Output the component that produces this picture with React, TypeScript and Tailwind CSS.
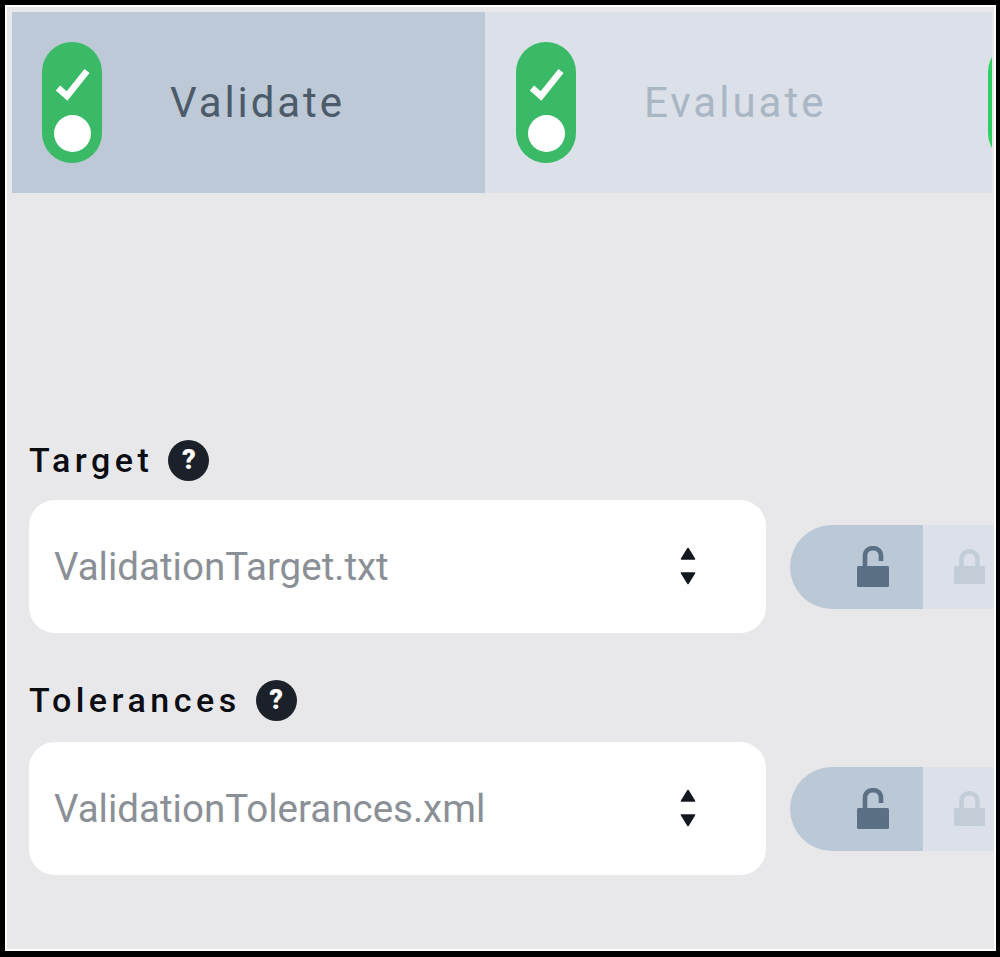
const roboto = "font-['Roboto',sans-serif]";

function Pill({ bright }: { bright?: boolean }) {
  return (
    <div className={`flex h-[121px] w-[60px] shrink-0 flex-col items-center rounded-full ${bright ? "bg-[#2fd062]" : "bg-[#3aba67]"}`}>
      <svg width="44" height="44" viewBox="0 0 44 44" className="mt-[19px]">
        <path d="M8 27 L17 35 L37 10" fill="none" stroke="#fff" strokeWidth="6.5" />
      </svg>
      <div className="mt-[10px] h-[37px] w-[37px] rounded-full bg-white" />
    </div>
  );
}

function Help() {
  return (
    <span className={`flex h-[41px] w-[41px] items-center justify-center rounded-full bg-[#1c2129] text-[27px] font-black text-white ${roboto}`}>
      ?
    </span>
  );
}

function Chevrons() {
  return (
    <svg width="16" height="38" viewBox="0 0 16 38" className="-mt-[1px] shrink-0">
      <path d="M8 1.5 L14.5 12 L1.5 12 Z" fill="#14181f" stroke="#14181f" strokeWidth="1.5" strokeLinejoin="round" />
      <path d="M1.5 26 L14.5 26 L8 36.5 Z" fill="#14181f" stroke="#14181f" strokeWidth="1.5" strokeLinejoin="round" />
    </svg>
  );
}

function OpenLock() {
  return (
    <svg width="34" height="42" viewBox="0 0 34 42">
      <path d="M9 21 V10 C9 5 12.5 2.2 17 2.2 C21.5 2.2 25 5 25 10 V15" fill="none" stroke="#5b7084" strokeWidth="4.6" />
      <rect x="1" y="20" width="32" height="21" rx="1.5" fill="#5b7084" />
    </svg>
  );
}

function ClosedLock() {
  return (
    <svg width="31" height="36" viewBox="0 0 31 36">
      <path d="M7.5 18 V10.5 C7.5 5 11 2.3 15.5 2.3 C20 2.3 23.5 5 23.5 10.5 V18" fill="none" stroke="#c2cdd7" strokeWidth="4.6" />
      <rect x="0" y="17" width="31" height="18" rx="1.5" fill="#c2cdd7" />
    </svg>
  );
}

function Field({ label, value, mt, gap }: { label: string; value: string; mt: string; gap: string }) {
  return (
    <div className={`flex flex-col ${mt}`}>
      <div className="flex h-[41px] items-center gap-[15px]">
        <span className={`-mt-[1px] text-[34px] font-medium leading-none tracking-[4.5px] text-[#0b0d12] ${roboto}`}>{label}</span>
        <Help />
      </div>
      <div className={`flex items-center ${gap}`}>
        <div className="flex h-[133px] w-[737px] shrink-0 items-center rounded-[26px] bg-white pl-[25px] pr-[70px]">
          <span className={`mt-[2px] flex-1 text-[38.5px] leading-none text-[#8b8f96] ${roboto}`}>{value}</span>
          <Chevrons />
        </div>
        <div className="ml-[24px] flex h-[84px] flex-1">
          <div className="flex w-[133px] items-center justify-end rounded-l-[42px] bg-[#bbc8d5] pr-[33px]">
            <OpenLock />
          </div>
          <div className="flex flex-1 items-center bg-[#dce0e9] pl-[31px]">
            <ClosedLock />
          </div>
        </div>
      </div>
    </div>
  );
}

export default function App() {
  return (
    <div className="h-[957px] w-[1000px] overflow-hidden bg-black pb-[6px] pl-[5px] pr-[4px] pt-[5px]">
      <div className="h-full w-full border-[2px] border-white bg-[#e8e8ea] pb-[2px] pl-[5px] pr-0 pt-[5px]">
        <div className="flex h-[181px] overflow-hidden pr-[2px]">
          <div className="flex w-[473px] shrink-0 items-center bg-[#bdc9d6] pl-[30px]">
            <Pill />
            <span className={`ml-[68px] text-[42px] leading-none tracking-[2.9px] text-[#4c5b69] ${roboto}`}>Validate</span>
          </div>
          <div className="flex flex-1 items-center overflow-hidden bg-[#dce0e9] pl-[31px]">
            <Pill />
            <span className={`ml-[68px] text-[42px] leading-none tracking-[3px] text-[#a9b6c4] ${roboto}`}>Evaluate</span>
            <div className="ml-[162px] shrink-0">
              <Pill bright />
            </div>
          </div>
        </div>
        <div className="pl-[17px]">
          <Field label="Target" value="ValidationTarget.txt" mt="mt-[247px]" gap="mt-[19px]" />
          <Field label="Tolerances" value="ValidationTolerances.xml" mt="mt-[47px]" gap="mt-[21px]" />
        </div>
      </div>
    </div>
  );
}
